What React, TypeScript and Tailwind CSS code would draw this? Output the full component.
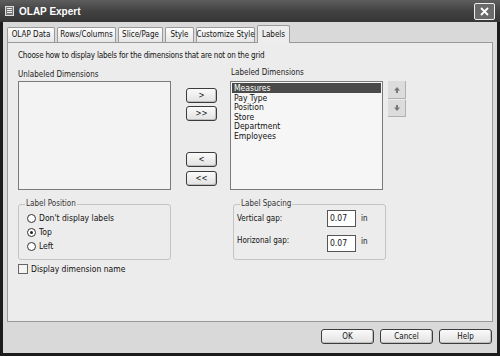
import React from 'react';

const font = { fontFamily: '"DejaVu Sans Condensed", "Liberation Sans", sans-serif' };

function Btn({ children, className = '' }: { children: React.ReactNode; className?: string }) {
  return (
    <div
      className={`flex items-center justify-center rounded-[3px] border border-[#3c3c3c] bg-gradient-to-b from-[#fafafa] to-[#e2e2e2] text-[8px] text-[#111] shadow-[inset_-1px_-1px_0_#bdbdbd] ${className}`}
    >
      {children}
    </div>
  );
}

function Radio({ label, checked = false }: { label: string; checked?: boolean }) {
  return (
    <div className="flex h-[14px] items-center gap-[3px]">
      <div className="flex h-[9px] w-[9px] items-center justify-center rounded-full border border-[#333] bg-white">
        {checked && <div className="h-[3px] w-[3px] rounded-full bg-[#222]" />}
      </div>
      <span className="text-[8.5px] text-[#111]">{label}</span>
    </div>
  );
}

function GroupBox({ title, className = '', children }: { title: string; className?: string; children: React.ReactNode }) {
  return (
    <div className={`relative rounded-[3px] border border-[#c4c4c4] ${className}`}>
      <span className="absolute -top-[6px] left-[6px] bg-[#ececec] px-[1px] text-[8px] leading-[10px] text-[#333]">
        {title}
      </span>
      {children}
    </div>
  );
}

const tabs = [
  { t: 'OLAP Data', w: 'w-[48px]' },
  { t: 'Rows/Columns', w: 'w-[59px]' },
  { t: 'Slice/Page', w: 'w-[45px]' },
  { t: 'Style', w: 'w-[29px]' },
  { t: 'Customize Style', w: 'w-[59px]' },
];
const labeled = ['Measures', 'Pay Type', 'Position', 'Store', 'Department', 'Employees'];

export default function App() {
  return (
    <div style={font} className="flex h-[356px] w-[500px] flex-col bg-[#1c1c1c] px-[3px] pb-[3px]">
      {/* title bar */}
      <div className="-mx-[3px] flex h-[22px] items-center bg-gradient-to-b from-[#5e5e5e] via-[#424242] to-[#363636] pl-[5px] pr-[5px]">
        <div className="mr-[5px] flex h-[10px] w-[9px] flex-col gap-[1px] border border-[#ddd] bg-[#777] p-[1px]">
          <div className="h-[1px] bg-[#eee]" />
          <div className="h-[1px] bg-[#eee]" />
          <div className="h-[1px] bg-[#eee]" />
        </div>
        <span className="font-['Liberation_Sans',sans-serif] text-[10px] font-bold text-white">OLAP Expert</span>
        <div className="ml-auto flex h-[17px] w-[21px] items-center justify-center rounded-[2px] border border-[#eee] bg-[#6a6a6a]">
          <svg width="11" height="11" viewBox="0 0 11 11">
            <path d="M2 2 L9 9 M9 2 L2 9" stroke="#fff" strokeWidth="1.8" />
          </svg>
        </div>
      </div>

      <div className="flex flex-1 flex-col bg-[#d9d9d9] px-[4px]">
        {/* tabs */}
        <div className="mt-[3px] flex h-[17px] items-end gap-[2px]">
          {tabs.map(({ t, w }) => (
            <div
              key={t}
              className={`flex h-[15px] items-center justify-center whitespace-nowrap rounded-t-[2px] border border-b-0 border-[#9a9a9a] bg-gradient-to-b from-[#fdfdfd] to-[#e6e6e6] text-[8px] text-[#111] ${w}`}
            >
              {t}
            </div>
          ))}
          <div className="relative -mb-[1px] flex h-[18px] w-[33px] items-center justify-center rounded-t-[2px] border border-b-0 border-[#9a9a9a] bg-[#ededed] text-[8px] text-[#111]">
            Labels
          </div>
        </div>

        {/* panel */}
        <div className="flex h-[280px] flex-col border border-[#9a9a9a] bg-[#ececec] pl-[10px]">
          <div className="mt-[7px] text-[8px] tracking-[-0.2px] text-[#111]">
            Choose how to display labels for the dimensions that are not on the grid
          </div>

          <div className="mt-[8px] flex">
            <div className="flex w-[153px] flex-col">
              <div className="text-[8px] leading-[10px] text-[#222]">Unlabeled Dimensions</div>
              <div className="mt-[1px] h-[109px] border border-[#7a7a7a] bg-[#f3f3f3]" />
            </div>

            <div className="ml-[15px] flex w-[31px] flex-col pt-[18px]">
              <Btn className="h-[15px]">&gt;</Btn>
              <Btn className="mt-[3px] h-[15px]">&gt;&gt;</Btn>
              <Btn className="mt-[31px] h-[15px]">&lt;</Btn>
              <Btn className="mt-[4px] h-[15px]">&lt;&lt;</Btn>
            </div>

            <div className="ml-[13px] flex w-[153px] flex-col">
              <div className="-mt-[2px] pl-[1px] text-[8px] leading-[10px] text-[#222]">Labeled Dimensions</div>
              <div className="mt-[3px] h-[109px] border border-[#7a7a7a] bg-[#f6f6f6] p-[1px]">
                {labeled.map((d, i) => (
                  <div
                    key={d}
                    className={`h-[9.6px] pl-[2px] text-[8.5px] leading-[10px] ${i === 0 ? 'bg-[#4a4a4a] text-white' : 'text-[#111]'}`}
                  >
                    {d}
                  </div>
                ))}
              </div>
            </div>

            <div className="ml-[5px] flex flex-col pt-[11px]">
              <div className="flex h-[18px] w-[18px] items-center justify-center border-b border-r border-[#b0b0b0] bg-[#dcdcdc]">
                <svg width="8" height="8" viewBox="0 0 8 8">
                  <path d="M4 1 L7 4.5 H5 V7 H3 V4.5 H1 Z" fill="#777" />
                </svg>
              </div>
              <div className="mt-[1px] flex h-[17px] w-[18px] items-center justify-center border-b border-r border-[#b0b0b0] bg-[#dcdcdc]">
                <svg width="8" height="8" viewBox="0 0 8 8">
                  <path d="M4 7 L7 3.5 H5 V1 H3 V3.5 H1 Z" fill="#777" />
                </svg>
              </div>
            </div>
          </div>

          <div className="mt-[14px] flex">
            <GroupBox title="Label Position" className="h-[56px] w-[153px]">
              <div className="flex flex-col pl-[8px] pt-[6px]">
                <Radio label="Don't display labels" />
                <Radio label="Top" checked />
                <Radio label="Left" />
              </div>
            </GroupBox>
            <GroupBox title="Label Spacing" className="ml-[62px] h-[56px] w-[153px]">
              <div className="flex flex-col pl-[3px] pt-[5px] text-[8px] text-[#111]">
                <div className="flex h-[17px] items-center">
                  <span className="w-[90px]">Vertical gap:</span>
                  <div className="flex h-[17px] w-[29px] items-center border border-[#555] bg-white pl-[2px] text-[8.5px]">0.07</div>
                  <span className="ml-[5px]">in</span>
                </div>
                <div className="mt-[8px] flex h-[17px] items-center">
                  <span className="-mt-[6px] w-[90px]">Horizonal gap:</span>
                  <div className="flex h-[17px] w-[29px] items-center border border-[#555] bg-white pl-[2px] text-[8.5px]">0.07</div>
                  <span className="-mt-[4px] ml-[5px]">in</span>
                </div>
              </div>
            </GroupBox>
          </div>

          <div className="mt-[3px] flex items-center gap-[3px]">
            <div className="h-[10px] w-[10px] border border-[#666] bg-[#f4f4f4]" />
            <span className="text-[8.5px] text-[#111]">Display dimension name</span>
          </div>
        </div>

        {/* footer */}
        <div className="mt-[7px] flex justify-end gap-[6px] pr-[1px]">
          <Btn className="h-[15px] w-[53px]">OK</Btn>
          <Btn className="h-[15px] w-[53px]">Cancel</Btn>
          <Btn className="h-[15px] w-[53px]">Help</Btn>
        </div>
      </div>
    </div>
  );
}
